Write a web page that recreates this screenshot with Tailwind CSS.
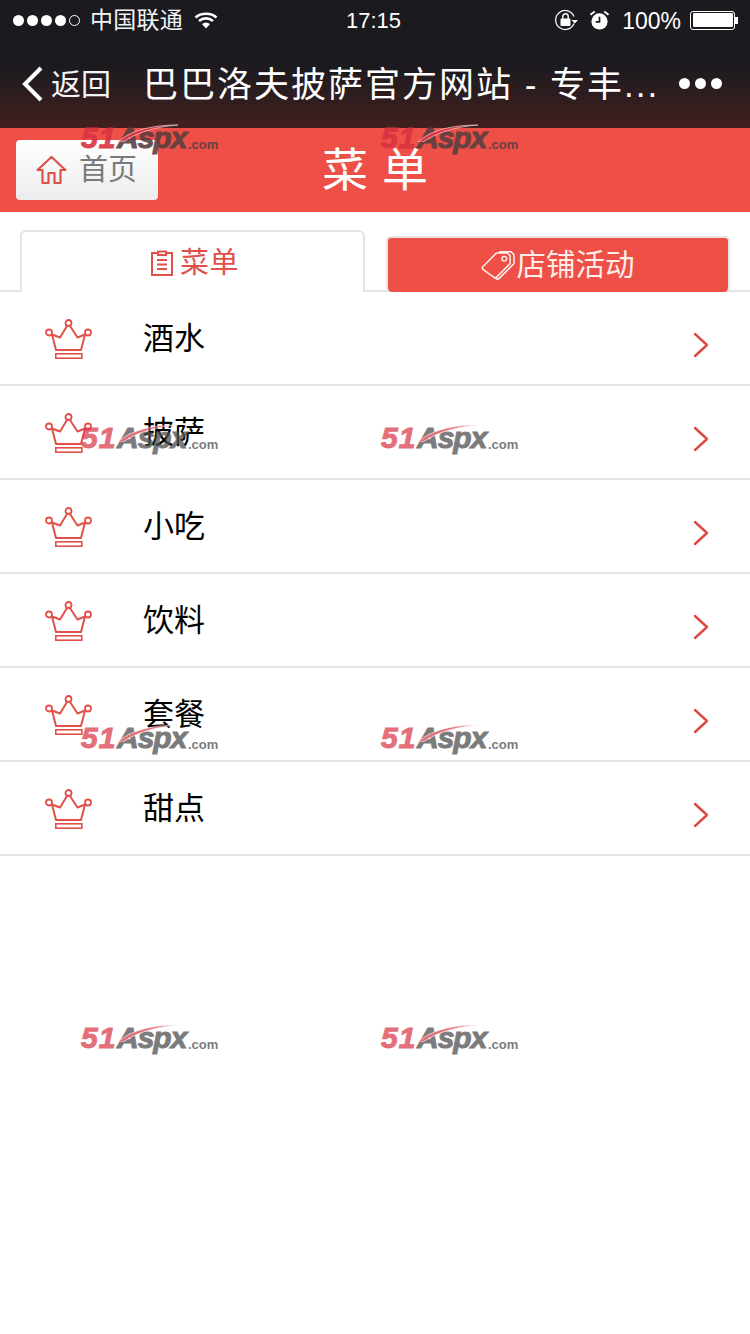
<!DOCTYPE html>
<html lang="zh"><head><meta charset="utf-8"><script src="https://cdn.jsdelivr.net/npm/@tailwindcss/browser@4"></script></head>
<body class="bg-white">
<div class="relative w-[750px] h-[1334px] overflow-hidden bg-white font-['Liberation_Sans','Noto_Sans_CJK_SC',sans-serif]">
  <svg class="hidden"><defs>
    <symbol id="crown" viewBox="0 0 47 41"><path d="M22 7 L15 18.5 L7 15.5 L11 31 H36 L40 15.5 L32.5 18.5 L25 7" fill="none" stroke="currentColor" stroke-width="2" stroke-linejoin="round"/><circle cx="23.5" cy="4" r="3" fill="#fff" stroke="currentColor" stroke-width="1.8"/><circle cx="4" cy="13.5" r="3" fill="#fff" stroke="currentColor" stroke-width="1.8"/><circle cx="43" cy="13.5" r="3" fill="#fff" stroke="currentColor" stroke-width="1.8"/><rect x="10.8" y="34.8" width="26" height="4.4" fill="none" stroke="currentColor" stroke-width="1.6"/></symbol>
    <symbol id="chev" viewBox="0 0 16 26"><path d="M2 2 L14 13 L2 24" fill="none" stroke="currentColor" stroke-width="2.4" stroke-linecap="round" stroke-linejoin="round"/></symbol>
    <symbol id="swoosh" viewBox="0 0 60 18"><path d="M0 18 C12 7 32 1 60 1 C36 3 18 9 5 18 Z" fill="currentColor" stroke="#fff" stroke-width="0.6"/></symbol>
  </defs></svg>

  <header class="h-[128px] bg-[linear-gradient(180deg,#1b1a1f_0%,#1b1a1f_50%,#42201f_100%)] text-white">
    <div class="h-[40px] flex items-center justify-between pl-[13px] pr-[12px]">
      <div class="flex items-center">
        <div class="flex items-center gap-[3px]">
          <span class="w-[11px] h-[11px] rounded-full bg-white"></span><span class="w-[11px] h-[11px] rounded-full bg-white"></span><span class="w-[11px] h-[11px] rounded-full bg-white"></span><span class="w-[11px] h-[11px] rounded-full bg-white"></span><span class="w-[11px] h-[11px] rounded-full border border-white"></span>
        </div>
        <span class="ml-[10px] text-[23px] leading-none tracking-[0.25px] text-gray-100">中国联通</span>
        <svg class="ml-[11px]" width="24" height="18" viewBox="0 0 24 18"><path d="M1.5 6.5 C7 1.5 17 1.5 22.5 6.5 M5 10 C9 6.5 15 6.5 19 10" fill="none" stroke="#fff" stroke-width="2.6"/><path d="M8 13 C10.5 11 13.5 11 16 13 L12 17.5 Z" fill="#fff"/></svg>
      </div>
      <span class="absolute left-[346px] top-[8px] text-[22px] leading-[26px] text-white">17:15</span>
      <div class="flex items-center">
        <svg width="24" height="24" viewBox="0 0 24 24"><path d="M20 15.5 A9.5 9.5 0 1 1 20 8.5" fill="none" stroke="#fff" stroke-width="1.2"/><path d="M17.5 12 H24 L20.7 15.5 Z" fill="#fff"/><rect x="6.5" y="10.5" width="10" height="7.5" rx="1" fill="#fff"/><path d="M8.8 11 V8.5 a2.7 2.7 0 0 1 5.4 0 V11" fill="none" stroke="#fff" stroke-width="1.4"/></svg>
        <svg class="ml-[11px]" width="21" height="21" viewBox="0 0 22 22"><circle cx="11" cy="12" r="8.5" fill="#fff"/><path d="M11 7 V12.5 H7" fill="none" stroke="#1b1a1f" stroke-width="1.8"/><path d="M1.5 5 L6 1.5 M20.5 5 L16 1.5" stroke="#fff" stroke-width="2"/></svg>
        <span class="ml-[12px] mt-[2px] text-[23px] leading-none">100%</span>
        <div class="ml-[9px] w-[45px] h-[19px] rounded-[3px] border border-white p-[1.5px]"><div class="w-full h-full bg-white rounded-[1px]"></div></div>
        <div class="w-[3px] h-[7px] bg-white"></div>
      </div>
    </div>
    <div class="relative h-[88px] flex items-start pt-[23px]">
      <svg class="ml-[22px] mt-[3px]" width="21" height="36" viewBox="0 0 21 36"><path d="M19 2 L3 18 L19 34" fill="none" stroke="#fff" stroke-width="4"/></svg>
      <span class="ml-[8px] mt-[4px] text-[30px] leading-[36px] text-gray-100">返回</span>
      <span class="ml-[32px] text-[35px] leading-[44px] tracking-[2px] text-white w-[530px] whitespace-nowrap">巴巴洛夫披萨官方网站 - 专丰...</span>
      <div class="absolute left-[679px] top-[38px] flex gap-[5px]"><span class="w-[11px] h-[11px] rounded-full bg-white"></span><span class="w-[11px] h-[11px] rounded-full bg-white"></span><span class="w-[11px] h-[11px] rounded-full bg-white"></span></div>
    </div>
  </header>

  <div class="relative h-[84px] bg-[#ee4f46] flex items-center justify-center">
    <div class="absolute left-[16px] top-[12px] w-[142px] h-[60px] rounded-[4px] bg-[linear-gradient(180deg,#ffffff,#ececec)] flex items-center pl-[20px]">
      <svg width="31" height="30" viewBox="0 0 31 30"><path d="M1.5 15 L15.5 2 L29.5 15 H24.5 V28 H18.5 V18 H12.5 V28 H6.5 V15 Z" fill="none" stroke="#e2504a" stroke-width="2.2" stroke-linejoin="round"/></svg>
      <span class="ml-[12px] text-[29px] leading-none text-[#7a7a7a]">首页</span>
    </div>
    <span class="text-[46px] leading-none tracking-[14px] pl-[14px] text-white">菜单</span>
  </div>

  <div class="relative h-[80px] flex items-end border-b-2 border-[#e4e4e4]">
    <div class="relative ml-[20px] w-[345px] h-[62px] -mb-[2px] bg-white border-2 border-b-0 border-[#e4e4e4] rounded-t-[6px] flex items-center justify-center pt-[2px] pl-[4px] text-[#e2504a] z-10">
      <svg width="24" height="28" viewBox="0 0 24 28"><path d="M8 4 H2 V26 H22 V4 H16 M8 6 V2.5 H16 V6 Z M7 11 H17 M7 15.5 H17 M7 20 H17" fill="none" stroke="currentColor" stroke-width="2"/></svg>
      <span class="ml-[6px] text-[29px] leading-none tracking-[0.5px]">菜单</span>
    </div>
    <div class="ml-[21px] w-[344px] h-[56px] -mb-[2px] bg-[#ee4f46] border-t-2 border-x-2 border-[#e8e4e2] rounded-[5px] flex items-center justify-center text-[#fdeeea] z-10">
      <svg width="35" height="31" viewBox="0 0 36 32"><path d="M2 17 L16 3 H27 L30 6 V14 L16 28 Q14.5 29.5 13 28 L2 20 Q0.8 18.5 2 17 Z M18 3 L20 1.8 H31 L34 5 V14 L19 29 Q17 31 15 29" fill="none" stroke="currentColor" stroke-width="1.6" stroke-linejoin="round"/><circle cx="24" cy="9" r="2.4" fill="none" stroke="currentColor" stroke-width="1.5"/></svg>
      <span class="text-[29.5px] leading-none">店铺活动</span>
    </div>
  </div>

  <ul>
    <li class="h-[94px] flex items-start border-b-2 border-[#e4e4e4] pl-[45px] pr-[41px]">
      <svg class="mt-[27px] text-[#e2504a]" width="47" height="41"><use href="#crown"/></svg>
      <span class="ml-[51px] mt-[27px] text-[31px] leading-[40px] text-black">酒水</span>
      <svg class="ml-auto mt-[40px] text-[#dd4a44]" width="16" height="26"><use href="#chev"/></svg>
    </li>
    <li class="h-[94px] flex items-start border-b-2 border-[#e4e4e4] pl-[45px] pr-[41px]">
      <svg class="mt-[27px] text-[#e2504a]" width="47" height="41"><use href="#crown"/></svg>
      <span class="ml-[51px] mt-[27px] text-[31px] leading-[40px] text-black">披萨</span>
      <svg class="ml-auto mt-[40px] text-[#dd4a44]" width="16" height="26"><use href="#chev"/></svg>
    </li>
    <li class="h-[94px] flex items-start border-b-2 border-[#e4e4e4] pl-[45px] pr-[41px]">
      <svg class="mt-[27px] text-[#e2504a]" width="47" height="41"><use href="#crown"/></svg>
      <span class="ml-[51px] mt-[27px] text-[31px] leading-[40px] text-black">小吃</span>
      <svg class="ml-auto mt-[40px] text-[#dd4a44]" width="16" height="26"><use href="#chev"/></svg>
    </li>
    <li class="h-[94px] flex items-start border-b-2 border-[#e4e4e4] pl-[45px] pr-[41px]">
      <svg class="mt-[27px] text-[#e2504a]" width="47" height="41"><use href="#crown"/></svg>
      <span class="ml-[51px] mt-[27px] text-[31px] leading-[40px] text-black">饮料</span>
      <svg class="ml-auto mt-[40px] text-[#dd4a44]" width="16" height="26"><use href="#chev"/></svg>
    </li>
    <li class="h-[94px] flex items-start border-b-2 border-[#e4e4e4] pl-[45px] pr-[41px]">
      <svg class="mt-[27px] text-[#e2504a]" width="47" height="41"><use href="#crown"/></svg>
      <span class="ml-[51px] mt-[27px] text-[31px] leading-[40px] text-black">套餐</span>
      <svg class="ml-auto mt-[40px] text-[#dd4a44]" width="16" height="26"><use href="#chev"/></svg>
    </li>
    <li class="h-[94px] flex items-start border-b-2 border-[#e4e4e4] pl-[45px] pr-[41px]">
      <svg class="mt-[27px] text-[#e2504a]" width="47" height="41"><use href="#crown"/></svg>
      <span class="ml-[51px] mt-[27px] text-[31px] leading-[40px] text-black">甜点</span>
      <svg class="ml-auto mt-[40px] text-[#dd4a44]" width="16" height="26"><use href="#chev"/></svg>
    </li>
  </ul>

  <!-- watermarks overlaying the page -->
  <div class="absolute left-[81px] top-[123px] w-[140px] h-[30px] pointer-events-none opacity-90 whitespace-nowrap font-bold italic leading-none"><span class="absolute left-0 top-0 text-[30px] tracking-[1px] text-[#d93242] [-webkit-text-stroke:1px_#d93242]">51</span><span class="absolute left-[36px] top-0 text-[30px] tracking-[-1px] text-[#5a3f3f] [-webkit-text-stroke:1px_#5a3f3f]">Aspx</span><svg class="absolute left-[37px] top-[1px] text-[#d93242]" width="60" height="18"><use href="#swoosh"/></svg><span class="absolute left-[107px] top-[15px] text-[13px] not-italic text-[#5a3f3f]">.com</span></div>
  <div class="absolute left-[381px] top-[123px] w-[140px] h-[30px] pointer-events-none opacity-90 whitespace-nowrap font-bold italic leading-none"><span class="absolute left-0 top-0 text-[30px] tracking-[1px] text-[#d93242] [-webkit-text-stroke:1px_#d93242]">51</span><span class="absolute left-[36px] top-0 text-[30px] tracking-[-1px] text-[#5a3f3f] [-webkit-text-stroke:1px_#5a3f3f]">Aspx</span><svg class="absolute left-[37px] top-[1px] text-[#d93242]" width="60" height="18"><use href="#swoosh"/></svg><span class="absolute left-[107px] top-[15px] text-[13px] not-italic text-[#5a3f3f]">.com</span></div>
  <div class="absolute left-[81px] top-[423px] w-[140px] h-[30px] pointer-events-none opacity-75 whitespace-nowrap font-bold italic leading-none"><span class="absolute left-0 top-0 text-[30px] tracking-[1px] text-[#db3f4f] [-webkit-text-stroke:1px_#db3f4f]">51</span><span class="absolute left-[36px] top-0 text-[30px] tracking-[-1px] text-[#505050] [-webkit-text-stroke:1px_#505050]">Aspx</span><svg class="absolute left-[37px] top-[1px] text-[#d8424e]" width="60" height="18"><use href="#swoosh"/></svg><span class="absolute left-[107px] top-[15px] text-[13px] not-italic text-[#505050]">.com</span></div>
  <div class="absolute left-[381px] top-[423px] w-[140px] h-[30px] pointer-events-none opacity-75 whitespace-nowrap font-bold italic leading-none"><span class="absolute left-0 top-0 text-[30px] tracking-[1px] text-[#db3f4f] [-webkit-text-stroke:1px_#db3f4f]">51</span><span class="absolute left-[36px] top-0 text-[30px] tracking-[-1px] text-[#505050] [-webkit-text-stroke:1px_#505050]">Aspx</span><svg class="absolute left-[37px] top-[1px] text-[#d8424e]" width="60" height="18"><use href="#swoosh"/></svg><span class="absolute left-[107px] top-[15px] text-[13px] not-italic text-[#505050]">.com</span></div>
  <div class="absolute left-[81px] top-[723px] w-[140px] h-[30px] pointer-events-none opacity-75 whitespace-nowrap font-bold italic leading-none"><span class="absolute left-0 top-0 text-[30px] tracking-[1px] text-[#db3f4f] [-webkit-text-stroke:1px_#db3f4f]">51</span><span class="absolute left-[36px] top-0 text-[30px] tracking-[-1px] text-[#505050] [-webkit-text-stroke:1px_#505050]">Aspx</span><svg class="absolute left-[37px] top-[1px] text-[#d8424e]" width="60" height="18"><use href="#swoosh"/></svg><span class="absolute left-[107px] top-[15px] text-[13px] not-italic text-[#505050]">.com</span></div>
  <div class="absolute left-[381px] top-[723px] w-[140px] h-[30px] pointer-events-none opacity-75 whitespace-nowrap font-bold italic leading-none"><span class="absolute left-0 top-0 text-[30px] tracking-[1px] text-[#db3f4f] [-webkit-text-stroke:1px_#db3f4f]">51</span><span class="absolute left-[36px] top-0 text-[30px] tracking-[-1px] text-[#505050] [-webkit-text-stroke:1px_#505050]">Aspx</span><svg class="absolute left-[37px] top-[1px] text-[#d8424e]" width="60" height="18"><use href="#swoosh"/></svg><span class="absolute left-[107px] top-[15px] text-[13px] not-italic text-[#505050]">.com</span></div>
  <div class="absolute left-[81px] top-[1023px] w-[140px] h-[30px] pointer-events-none opacity-75 whitespace-nowrap font-bold italic leading-none"><span class="absolute left-0 top-0 text-[30px] tracking-[1px] text-[#db3f4f] [-webkit-text-stroke:1px_#db3f4f]">51</span><span class="absolute left-[36px] top-0 text-[30px] tracking-[-1px] text-[#505050] [-webkit-text-stroke:1px_#505050]">Aspx</span><svg class="absolute left-[37px] top-[1px] text-[#d8424e]" width="60" height="18"><use href="#swoosh"/></svg><span class="absolute left-[107px] top-[15px] text-[13px] not-italic text-[#505050]">.com</span></div>
  <div class="absolute left-[381px] top-[1023px] w-[140px] h-[30px] pointer-events-none opacity-75 whitespace-nowrap font-bold italic leading-none"><span class="absolute left-0 top-0 text-[30px] tracking-[1px] text-[#db3f4f] [-webkit-text-stroke:1px_#db3f4f]">51</span><span class="absolute left-[36px] top-0 text-[30px] tracking-[-1px] text-[#505050] [-webkit-text-stroke:1px_#505050]">Aspx</span><svg class="absolute left-[37px] top-[1px] text-[#d8424e]" width="60" height="18"><use href="#swoosh"/></svg><span class="absolute left-[107px] top-[15px] text-[13px] not-italic text-[#505050]">.com</span></div>
</div>
</body></html>
